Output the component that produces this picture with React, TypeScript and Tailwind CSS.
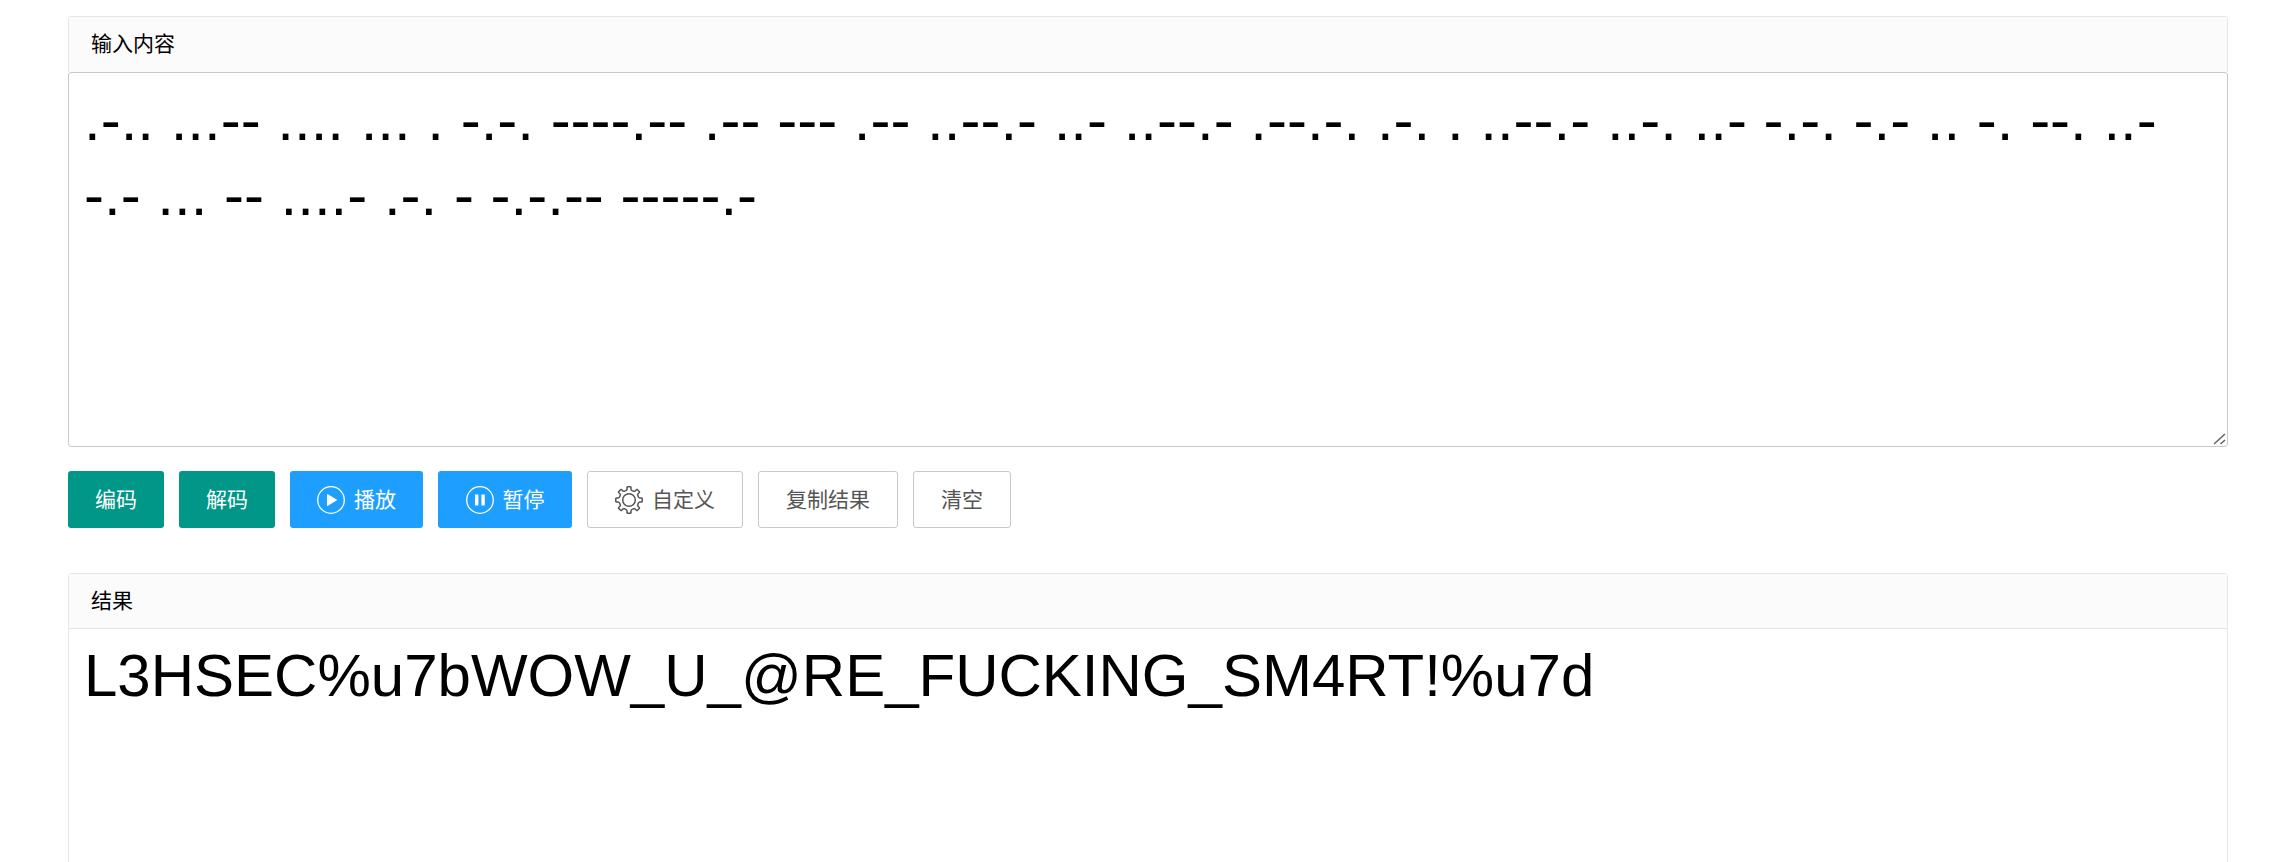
import type { ReactNode } from "react";

const MORSE =
  ".-.. ...-- .... ... . -.-. ----.-- .-- --- .-- ..--.- ..- ..--.- .--.-. .-. . ..--.- ..-. ..- -.-. -.- .. -. --. ..- -.- ... -- ....- .-. - -.-.-- -----.-";
const RESULT = "L3HSEC%u7bWOW_U_@RE_FUCKING_SM4RT!%u7d";

function PlayIcon() {
  return (
    <svg className="mr-[9px] size-[28px] shrink-0" viewBox="0 0 28 28" fill="none">
      <circle cx="14" cy="14" r="13.3" stroke="currentColor" strokeWidth="1.3" />
      <path d="M10 8.6v10.8a.5.5 0 0 0 .8.4l8.8-5.2a.6.6 0 0 0 0-1.1l-8.8-5.3a.5.5 0 0 0-.8.4z" fill="currentColor" />
    </svg>
  );
}

function PauseIcon() {
  return (
    <svg className="mr-[9px] size-[28px] shrink-0" viewBox="0 0 28 28" fill="none">
      <circle cx="14" cy="14" r="13.3" stroke="currentColor" strokeWidth="1.3" />
      <path d="M9 8.5h3.4v11H9zM15.4 8.5h3.4v11h-3.4z" fill="currentColor" />
    </svg>
  );
}

const gearPath = (() => {
  const points: string[] = [];
  for (let i = 0; i < 8; i++) {
    const base = (i * Math.PI) / 4;
    const corners: [number, number][] = [
      [-0.23, 10.3],
      [-0.17, 11.2],
      [-0.16, 12.8],
      [-0.12, 13.3],
      [0.12, 13.3],
      [0.16, 12.8],
      [0.17, 11.2],
      [0.23, 10.3],
      [0.32, 9.9],
      [0.465, 9.9],
    ];
    for (const [a, r] of corners) {
      points.push(
        `${(14 + r * Math.sin(base + a)).toFixed(2)} ${(14 - r * Math.cos(base + a)).toFixed(2)}`
      );
    }
  }
  return `M${points.join("L")}Z`;
})();

function GearIcon() {
  return (
    <svg
      className="mr-[9px] size-[28px] shrink-0"
      viewBox="0 0 28 28"
      fill="none"
      stroke="currentColor"
      strokeWidth="1.5"
      strokeLinejoin="round"
    >
      <path d={gearPath} />
      <circle cx="14" cy="14" r="6.3" />
    </svg>
  );
}

function ResizeGrip() {
  return (
    <svg
      className="pointer-events-none absolute right-[2px] bottom-[2px] size-[13px]"
      viewBox="0 0 13 13"
      fill="none"
      stroke="#666"
      strokeWidth="1.6"
    >
      <path d="M1 12 12 2M7.5 12 12 8" />
    </svg>
  );
}

function Button({ className, children }: { className: string; children: ReactNode }) {
  return (
    <button
      type="button"
      className={`flex h-[57px] items-center justify-center rounded-[3px] text-[21px] leading-none whitespace-nowrap ${className}`}
    >
      {children}
    </button>
  );
}

function PanelTitle({ className, children }: { className: string; children: ReactNode }) {
  return <h2 className={`bg-[#fbfbfb] pl-[22px] text-[21px] leading-[53px] text-black ${className}`}>{children}</h2>;
}

export default function App() {
  return (
    <main className="h-[862px] overflow-hidden bg-white pt-[16px] pl-[68px] font-['Liberation_Sans','Noto_Sans_CJK_SC',sans-serif]">
      <div className="w-[2160px]">
        <section>
          <div className="rounded-t-[3px] border border-b-0 border-[#e6e6e6]">
            <PanelTitle className="h-[55px]">输入内容</PanelTitle>
          </div>
          <div className="relative">
            <textarea
              spellCheck={false}
              defaultValue={MORSE}
              className="block h-[375px] w-full resize-none rounded-[3px] border border-[#c9c9c9] bg-white px-[15px] py-[9px] text-[60px] leading-[75px] text-black outline-none"
            />
            <ResizeGrip />
          </div>
        </section>

        <div className="mt-[24px] flex">
          <Button className="w-[96px] bg-[#009688] text-white">编码</Button>
          <Button className="ml-[15px] w-[96px] bg-[#009688] text-white">解码</Button>
          <Button className="ml-[15px] w-[133px] bg-[#1e9fff] text-white">
            <PlayIcon />
            播放
          </Button>
          <Button className="ml-[15px] w-[134px] bg-[#1e9fff] text-white">
            <PauseIcon />
            暂停
          </Button>
          <Button className="ml-[15px] w-[156px] border border-[#c9c9c9] bg-white text-[#555]">
            <GearIcon />
            自定义
          </Button>
          <Button className="ml-[15px] w-[140px] border border-[#c9c9c9] bg-white text-[#555]">复制结果</Button>
          <Button className="ml-[15px] w-[98px] border border-[#c9c9c9] bg-white text-[#555]">清空</Button>
        </div>

        <section className="mt-[45px] h-[400px] rounded-[3px] border border-[#e6e6e6]">
          <PanelTitle className="h-[54px]">结果</PanelTitle>
          <div className="border-t border-[#e6e6e6] px-[15px] py-[9px] text-[60px] leading-[75px] text-black">
            {RESULT}
          </div>
        </section>
      </div>
    </main>
  );
}
